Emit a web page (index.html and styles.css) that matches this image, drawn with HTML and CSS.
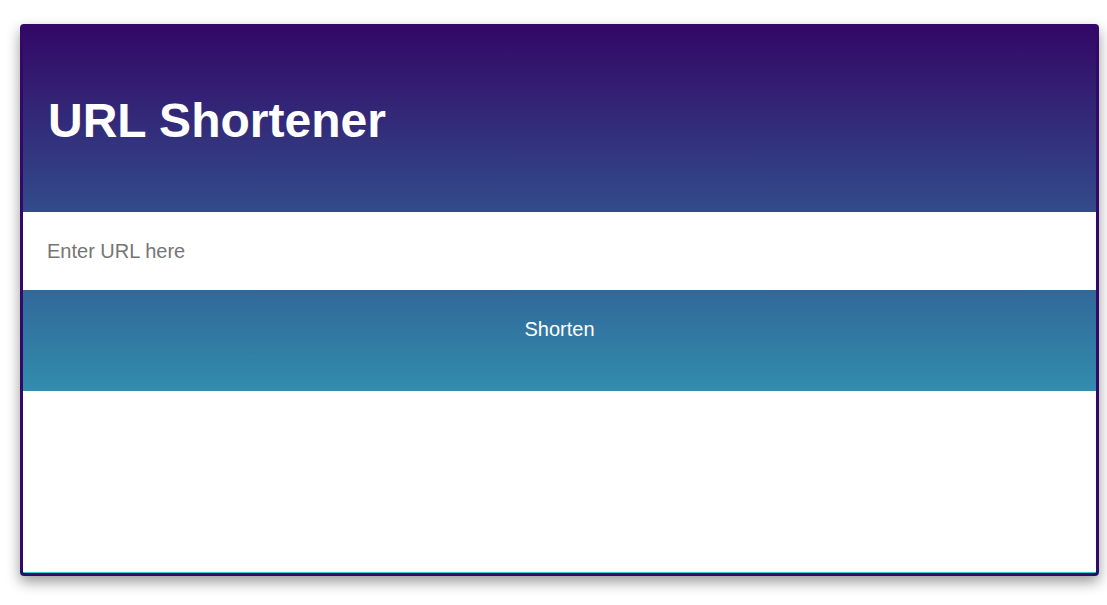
FILE: index.html
```html
<!DOCTYPE html>
<html lang="en">
<head>
<meta charset="utf-8">
<title>URL Shortener</title>
<link rel="stylesheet" href="styles.css">
</head>
<body>
<div class="card">
  <header class="card-header">
    <h1 class="title">URL Shortener</h1>
  </header>
  <form class="form" onsubmit="return false">
    <input class="url-input" type="text" placeholder="Enter URL here">
    <button class="shorten-btn" type="submit">Shorten</button>
  </form>
  <div class="result"></div>
</div>
</body>
</html>
```
FILE: styles.css
```css
html, body {
  margin: 0;
  padding: 0;
  background: #ffffff;
}
body {
  box-sizing: border-box;
  min-height: 605px;
  padding: 24px 8px 0 20px;
  font-family: "Liberation Sans", Arial, sans-serif;
}
.card {
  width: 1079px;
  box-sizing: border-box;
  height: 552px;
  border: 3px solid #330867;
  border-radius: 4px;
  background: linear-gradient(to top, #30cfd0 0%, #330867 100%);
  box-shadow: 0 6px 14px rgba(0, 0, 0, 0.4);
  display: flex;
  flex-direction: column;
  overflow: hidden;
}
.card-header {
  height: 185px;
  box-sizing: border-box;
  padding: 66px 25px 0;
}
.title {
  margin: 0;
  color: #ffffff;
  font-size: 48px;
  line-height: 56px;
  font-weight: bold;
}
.form {
  display: flex;
  flex-direction: column;
  margin: 0 0 23px;
}
.url-input {
  height: 78px;
  box-sizing: border-box;
  border: none;
  outline: none;
  margin: 0;
  padding: 0 24px;
  background: #ffffff;
  font-family: "Liberation Sans", Arial, sans-serif;
  font-size: 20px;
  color: #333333;
}
.url-input::placeholder {
  color: #757575;
}
.shorten-btn {
  height: 78px;
  border: none;
  margin: 0;
  padding: 0;
  background: transparent;
  color: #ffffff;
  font-family: "Liberation Sans", Arial, sans-serif;
  font-size: 20px;
  cursor: pointer;
}
.result {
  height: 181px;
  background: #ffffff;
}
```
